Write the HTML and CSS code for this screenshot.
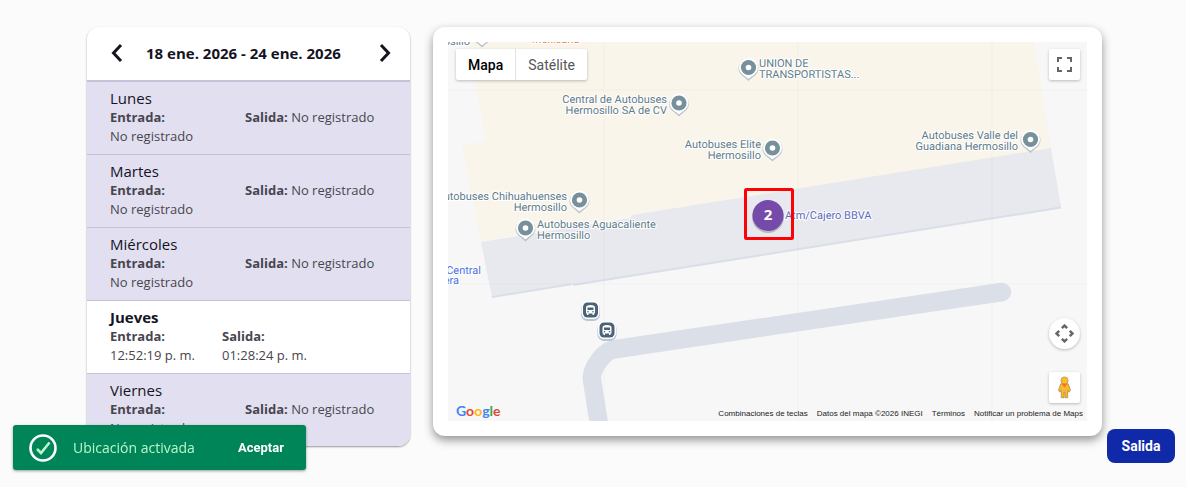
FILE: index.html
```html
<!DOCTYPE html>
<html lang="es">
<head>
<meta charset="utf-8">
<meta name="viewport" content="width=device-width, initial-scale=1">
<title>Registro de asistencia</title>
<link rel="stylesheet" href="styles.css">
</head>
<body>
<main class="layout">
  <section class="week" aria-label="Semana">
    <header class="week-header">
      <button class="nav" type="button" aria-label="Semana anterior"><svg width="14" height="20" viewBox="0 0 14 20"><path d="M11 2 3.500 10 11 18"/></svg></button>
      <h1 class="week-title">18 ene. 2026 - 24 ene. 2026</h1>
      <button class="nav" type="button" aria-label="Semana siguiente"><svg width="14" height="20" viewBox="0 0 14 20"><path d="M3 2 10.500 10 3 18"/></svg></button>
    </header>
    <ul class="days">
      <li class="day"><h2 class="day-name">Lunes</h2><div class="times"><p><b>Entrada:</b> <span>No registrado</span></p><p><b>Salida:</b> <span>No registrado</span></p></div></li>
      <li class="day"><h2 class="day-name">Martes</h2><div class="times"><p><b>Entrada:</b> <span>No registrado</span></p><p><b>Salida:</b> <span>No registrado</span></p></div></li>
      <li class="day"><h2 class="day-name">Miércoles</h2><div class="times"><p><b>Entrada:</b> <span>No registrado</span></p><p><b>Salida:</b> <span>No registrado</span></p></div></li>
      <li class="day active"><h2 class="day-name">Jueves</h2><div class="times"><p><b>Entrada:</b> <span>12:52:19 p. m.</span></p><p><b>Salida:</b> <span>01:28:24 p. m.</span></p></div></li>
      <li class="day"><h2 class="day-name">Viernes</h2><div class="times"><p><b>Entrada:</b> <span>No registrado</span></p><p><b>Salida:</b> <span>No registrado</span></p></div></li>
    </ul>
  </section>

  <section class="map-card" aria-label="Mapa de ubicación">
    <div class="map">
      <svg class="map-canvas" viewBox="448 42 639 379" preserveAspectRatio="xMinYMin slice">
        <defs>
          <g id="pin">
            <path d="M0 12.500C-3 9-10 6-10 0A10 10 0 0 1 10 0C10 6 3 9 0 12.500Z" fill="#9aa8ba" opacity=".65"/>
            <path d="M0 10.500C-3 7.500-9.500 5-9.500-1A9.500 9.500 0 0 1 9.500-1C9.500 5 3 7.500 0 10.500Z" fill="#fff"/>
            <circle cy="-1" r="7.600" fill="#78909c"/>
            <circle cy="-1" r="2.800" fill="#fff"/>
          </g>
          <g id="bus">
            <rect x="-9.500" y="-8" width="19" height="19" rx="6.500" fill="#a8b4c6" opacity=".75"/>
            <rect x="-9" y="-9" width="18" height="18" rx="6" fill="#fff"/>
            <rect x="-7.500" y="-7.500" width="15" height="15" rx="4.500" fill="#4b6378"/>
            <path d="M-4.500-2.500Q-4.500-5 0-5T4.500-2.500V3.500H3.500V5H2V3.500H-2V5H-3.500V3.500H-4.500Z" fill="#fff"/>
            <path d="M-3-2.500H3V0H-3Z" fill="#4b6378"/>
            <circle cx="-2.500" cy="1.800" r=".8" fill="#4b6378"/><circle cx="2.500" cy="1.800" r=".8" fill="#4b6378"/>
          </g>
        </defs>
        <rect x="448" y="42" width="639" height="379" fill="#f7f7f7"/>
        <path d="M468 42H1034L1051 148 481 241 462 146 486 140 475 82Z" fill="#faf5ea"/>
        <path d="M481 242 630 218 632 215 1051 148 1061 207 573 285 572 283 492 297Z" fill="#e8e9ee"/>
        <path d="M492 297 572 284M573 285 1061 207.500" stroke="#d9dee7" stroke-width="2" fill="none"/>
        <path d="M604 42V421M798 42V421M992 42V421M448 90H1087M448 284H1087" stroke="#000" stroke-opacity=".025" fill="none"/>
        <path d="M1002 292 613 349.500Q604 352 596 365 591 374 592 380L600 430" stroke="#dbdfe8" stroke-width="18.500" fill="none" stroke-linejoin="round"/>
        <circle cx="1002" cy="292" r="9.250" fill="#dbdfe8"/>

        <use href="#pin" x="482" y="35"/>
        <use href="#pin" x="748.500" y="68.500"/>
        <use href="#pin" x="679" y="104"/>
        <use href="#pin" x="772.500" y="149"/>
        <use href="#pin" x="1030.500" y="140.500"/>
        <use href="#pin" x="579.500" y="201"/>
        <use href="#pin" x="525.500" y="229"/>
        <use href="#bus" x="590.500" y="310"/>
        <use href="#bus" x="607" y="330"/>

        <g class="place">
          <text class="end" x="470" y="45">Hermosillo</text>
          <text x="759" y="67">UNION DE</text><text x="759" y="78">TRANSPORTISTAS...</text>
          <text class="end" x="667" y="103">Central de Autobuses</text><text class="end" x="667" y="114">Hermosillo SA de CV</text>
          <text class="end" x="761" y="148">Autobuses Elite</text><text class="end" x="761" y="159">Hermosillo</text>
          <text class="end" x="1018" y="139">Autobuses Valle del</text><text class="end" x="1018" y="150">Guadiana Hermosillo</text>
          <text class="end" x="567" y="200">Autobuses Chihuahuenses</text><text class="end" x="567" y="211">Hermosillo</text>
          <text x="537" y="228">Autobuses Aguacaliente</text><text x="537" y="239">Hermosillo</text>
        </g>
        <g class="place food"><text x="532" y="43">Mexicana</text></g>
        <g class="place shop">
          <text class="end" x="481" y="274">Central</text>
          <text class="end" x="459" y="284">Camionera</text>
        </g>
        <g class="place bank"><text x="785" y="219">Atm/Cajero BBVA</text></g>

        <circle cx="768" cy="217" r="16" fill="#000" opacity=".2"/>
        <circle cx="768" cy="215.500" r="15.500" fill="#764aa9"/>
        <text class="cluster" x="768" y="220">2</text>
        <rect x="745.500" y="189.500" width="47" height="49" rx="1" fill="none" stroke="#fb0207" stroke-width="3"/>
      </svg>
      <div class="map-types">
        <button class="type selected" type="button">Mapa</button>
        <button class="type" type="button">Satélite</button>
      </div>
      <button class="control fullscreen" type="button" aria-label="Pantalla completa"><svg width="15" height="15" viewBox="0 0 15 15"><path d="M1 5V1H5M10 1H14V5M14 10V14H10M5 14H1V10" fill="none" stroke="#666" stroke-width="2"/></svg></button>
      <div class="side-controls">
        <button class="control round" type="button" aria-label="Controles de cámara"><svg width="19" height="19" viewBox="0 0 18 18"><path d="M6.500 4 9 1.500 11.500 4M6.500 14 9 16.500 11.500 14M4 6.500 1.500 9 4 11.500M14 6.500 16.500 9 14 11.500" fill="none" stroke="#666" stroke-width="2.300"/></svg></button>
        <button class="control" type="button" aria-label="Street View"><svg width="13" height="23" viewBox="0 0 14 24"><path d="M3 8H11L13.500 15 12 17 10.500 15V23H7.500V17H6.500V23H3.500V15L2 17 .5 15Z" fill="#fbb829" stroke="#a98a4e" stroke-width=".8"/><circle cx="7" cy="4.500" r="3.900" fill="#fbbc2d" stroke="#b9924e" stroke-width=".8"/><path d="M4 8H10L7 12Z" fill="#e8762c"/></svg></button>
      </div>
      <a class="logo" href="#" aria-label="Google"><span class="b">G</span><span class="r">o</span><span class="y">o</span><span class="b">g</span><span class="g">l</span><span class="r">e</span></a>
      <div class="legal">
        <button type="button">Combinaciones de teclas</button>
        <span>Datos del mapa ©2026 INEGI</span>
        <a href="#">Términos</a>
        <a href="#">Notificar un problema de Maps</a>
      </div>
    </div>
  </section>
</main>

<div class="toast" role="status">
  <svg width="28" height="28" viewBox="0 0 28 28"><circle cx="14" cy="14" r="12.500" fill="none" stroke="#fff" stroke-width="2.600"/><path d="M8 15 12 19 20.500 8.500" fill="none" stroke="#b9f6ca" stroke-width="2.600"/></svg>
  <span class="toast-text">Ubicación activada</span>
  <button class="toast-action" type="button">Aceptar</button>
</div>
<button class="exit" type="button">Salida</button>
</body>
</html>
```
FILE: styles.css
```css
* {
  box-sizing: border-box;
}

body {
  margin: 0;
  min-height: 100vh;
  background: #fbfbfb;
  color: #15141f;
  font-family: "Open Sans", "Noto Sans", sans-serif;
}

button {
  margin: 0;
  padding: 0;
  border: 0;
  background: none;
  font: inherit;
  color: inherit;
  cursor: pointer;
}

h1,
h2,
p,
ul {
  margin: 0;
  padding: 0;
}

.layout {
  display: grid;
  grid-template-columns: 323px 1fr;
  align-items: start;
  gap: 23px;
  padding: 27px 84px 24px 87px;
}

.week {
  overflow: hidden;
  border-radius: 12px;
  background: #fff;
  box-shadow: 0 1px 2px rgba(0, 0, 0, 0.4);
}

.week-header {
  display: flex;
  align-items: center;
  height: 55px;
  padding: 0 18px 2px 23px;
  border-bottom: 2px solid #c4c1d8;
}

.nav {
  display: flex;
}

.nav path {
  fill: none;
  stroke: #15141f;
  stroke-width: 3;
}

.week-title {
  flex: 1;
  margin-left: 22px;
  font-size: 15px;
  font-weight: 700;
}

.days {
  list-style: none;
}

.day {
  padding: 8px 23px;
  border-bottom: 1px solid #c4c1d8;
  background: #e2e0f0;
}

.day:last-child {
  border-bottom: 0;
}

.day-name {
  margin-bottom: 2px;
  font-size: 15px;
  font-weight: 400;
  line-height: 16px;
}

.times {
  display: grid;
  grid-template-columns: 135px 1fr;
  color: #47464f;
  font-size: 13px;
  line-height: 19px;
}

.times span {
  display: inline-block;
  white-space: nowrap;
}

.active {
  background: #fff;
}

.active .day-name {
  font-weight: 700;
}

.active .times {
  grid-template-columns: 112px 112px;
}

.map-card {
  padding: 15px;
  border-radius: 12px;
  background: #fff;
  box-shadow: 0 4px 10px rgba(0, 0, 0, 0.42);
}

.map {
  position: relative;
  overflow: hidden;
  font-family: Roboto, sans-serif;
}

.map-canvas {
  display: block;
  width: 100%;
}

.place {
  fill: #5f7d8c;
  stroke: #fff;
  stroke-width: 2px;
  paint-order: stroke;
  font-size: 11px;
  text-rendering: geometricPrecision;
}

.end {
  text-anchor: end;
}

.food {
  fill: #f08040;
}

.shop {
  fill: #4f73e0;
}

.bank {
  fill: #5c6bc0;
}

.cluster {
  fill: #fff;
  font-family: "Open Sans", sans-serif;
  font-size: 15px;
  font-weight: 700;
  text-anchor: middle;
}

.map-types {
  position: absolute;
  top: 7px;
  left: 8px;
  display: flex;
  border-radius: 2px;
  background: #fff;
  box-shadow: 0 1px 3px rgba(0, 0, 0, 0.25);
}

.type {
  height: 31px;
  padding: 0 12px;
  color: #565656;
  font-size: 14px;
}

.type + .type {
  border-left: 1px solid #e2e2e2;
}

.selected {
  color: #000;
  font-weight: 500;
}

.control {
  display: grid;
  place-items: center;
  width: 31px;
  height: 31px;
  border-radius: 2px;
  background: #fff;
  box-shadow: 0 1px 3px rgba(0, 0, 0, 0.25);
}

.fullscreen {
  position: absolute;
  top: 7px;
  right: 7px;
}

.side-controls {
  position: absolute;
  right: 7px;
  bottom: 18px;
  display: grid;
  gap: 23px;
}

.round {
  border-radius: 50%;
}

.logo {
  position: absolute;
  bottom: 0;
  left: 8px;
  font-family: Lato, sans-serif;
  font-size: 14px;
  font-weight: 700;
  line-height: 20px;
  text-decoration: none;
}

.b { color: #4285f4; }
.r { color: #ea4335; }
.y { color: #fbbc05; }
.g { color: #34a853; }

.legal {
  position: absolute;
  right: 4px;
  bottom: 0;
  display: flex;
  gap: 9px;
  color: #222;
  font-family: "Liberation Sans", Arial, sans-serif;
  font-size: 8px;
  line-height: 14px;
}

.legal a {
  color: inherit;
  text-decoration: none;
}

.toast {
  position: fixed;
  bottom: 17px;
  left: 13px;
  display: flex;
  align-items: center;
  width: 293px;
  height: 45px;
  padding: 0 22px 0 16px;
  border-radius: 3px;
  background: #008558;
  color: #b9f6ca;
  font-size: 14px;
  box-shadow: 0 1px 3px rgba(0, 0, 0, 0.4);
}

.toast-text {
  margin-left: 16px;
}

.toast-action {
  margin-left: auto;
  color: #fff;
  font-family: Roboto, sans-serif;
  font-size: 13px;
  font-weight: 700;
}

.exit {
  position: fixed;
  right: 11px;
  bottom: 24px;
  width: 68px;
  height: 34px;
  border-radius: 8px;
  background: #1029a8;
  color: #fff;
  font-family: Roboto, sans-serif;
  font-size: 14px;
  font-weight: 700;
}
```
